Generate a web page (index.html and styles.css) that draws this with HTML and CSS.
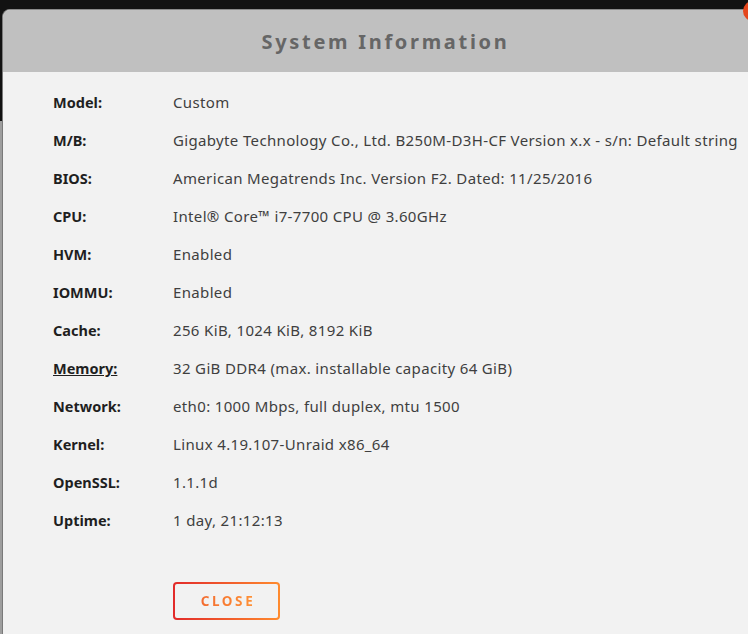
FILE: index.html
```html
<!DOCTYPE html>
<html>
<head>
<meta charset="utf-8">
<link rel="stylesheet" href="styles.css">
</head>
<body>
<div class="dialog">
  <div class="dialog-header"><h1 class="title">System Information</h1></div>
  <div class="dialog-body">
    <div class="info">
      <div class="label">Model:</div><div class="value">Custom</div>
      <div class="label">M/B:</div><div class="value">Gigabyte Technology Co., Ltd. B250M-D3H-CF Version x.x - s/n: Default string</div>
      <div class="label">BIOS:</div><div class="value">American Megatrends Inc. Version F2. Dated: 11/25/2016</div>
      <div class="label">CPU:</div><div class="value">Intel® Core™ i7-7700 CPU @ 3.60GHz</div>
      <div class="label">HVM:</div><div class="value">Enabled</div>
      <div class="label">IOMMU:</div><div class="value">Enabled</div>
      <div class="label">Cache:</div><div class="value">256 KiB, 1024 KiB, 8192 KiB</div>
      <div class="label link">Memory:</div><div class="value">32 GiB DDR4 (max. installable capacity 64 GiB)</div>
      <div class="label">Network:</div><div class="value">eth0: 1000 Mbps, full duplex, mtu 1500</div>
      <div class="label">Kernel:</div><div class="value">Linux 4.19.107-Unraid x86_64</div>
      <div class="label">OpenSSL:</div><div class="value">1.1.1d</div>
      <div class="label">Uptime:</div><div class="value">1 day, 21:12:13</div>
    </div>
    <div class="actions"><button class="close-btn"><span class="close-text">CLOSE</span></button></div>
  </div>
</div>
<div class="corner-badge"></div>
</body>
</html>
```

FILE: styles.css
```css
html, body {
  margin: 0;
  padding: 0;
  height: 100%;
  overflow: hidden;
}
body {
  background: linear-gradient(#121212 0 121px, #9e9e9e 121px);
  font-family: "Noto Sans", "Open Sans", sans-serif;
  position: relative;
}
.dialog {
  margin: 9px 0 0 2px;
  width: 766px;
  height: 640px;
  background: #f2f2f2;
  border-left: 1px solid #7a7a7a;
  border-top: 1px solid #8a8a8a;
  border-radius: 8px 8px 0 0;
  overflow: hidden;
  box-sizing: border-box;
}
.dialog-header {
  height: 62px;
  background: #c0c0c0;
  display: flex;
  align-items: center;
  justify-content: center;
}
.title {
  margin: 0;
  font-size: 20px;
  font-weight: 700;
  letter-spacing: 2.7px;
  color: #666666;
}
.dialog-body {
  padding: 11px 0 0 50px;
}
.info {
  display: grid;
  grid-template-columns: 120px auto;
  grid-auto-rows: 38px;
  align-items: center;
}
.label {
  font-size: 14.5px;
  font-weight: 700;
  color: #1f1f1f;
}
.label.link {
  text-decoration: underline;
}
.value {
  font-size: 15px;
  letter-spacing: 0.35px;
  color: #3f3f3f;
  white-space: nowrap;
}
.actions {
  padding: 43px 0 0 120px;
}
.close-btn {
  width: 107px;
  height: 38px;
  border: 2px solid transparent;
  border-radius: 4px;
  background: linear-gradient(#f2f2f2, #f2f2f2) padding-box,
              linear-gradient(90deg, #e22a2a, #ff8b2e) border-box;
  padding: 0;
  cursor: pointer;
  font-family: inherit;
}
.close-text {
  font-size: 13.5px;
  font-weight: 700;
  letter-spacing: 2.6px;
  background: linear-gradient(90deg, #f26a30, #ff9236);
  -webkit-background-clip: text;
  background-clip: text;
  color: transparent;
  padding-left: 3px;
}
.corner-badge {
  position: absolute;
  z-index: 2;
  top: 1px;
  left: 743px;
  width: 20px;
  height: 20px;
  border-radius: 50%;
  background: #e4461c;
}
```
